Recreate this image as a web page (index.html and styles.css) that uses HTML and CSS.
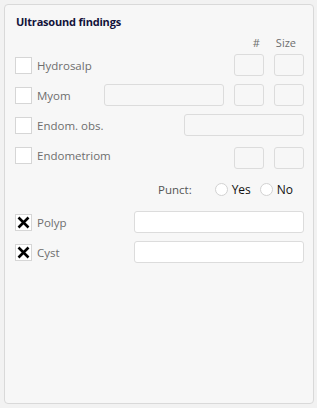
FILE: index.html
```html
<!DOCTYPE html>
<html>
<head>
<meta charset="utf-8">
<link rel="stylesheet" href="styles.css">
</head>
<body>
<div class="panel">
  <div class="title">Ultrasound findings</div>
  <div class="head"><span class="h-num">#</span><span class="h-size">Size</span></div>

  <div class="row">
    <span class="cb"></span><span class="lbl">Hydrosalp</span>
    <span class="right"><span class="box sm"></span><span class="box sm"></span></span>
  </div>
  <div class="row">
    <span class="cb"></span><span class="lbl">Myom</span>
    <span class="right"><span class="box wide"></span><span class="box sm"></span><span class="box sm"></span></span>
  </div>
  <div class="row">
    <span class="cb"></span><span class="lbl">Endom. obs.</span>
    <span class="right"><span class="box wide"></span></span>
  </div>
  <div class="row top">
    <span class="cb"></span><span class="lbl">Endometriom</span>
    <span class="right"><span class="box sm"></span><span class="box sm"></span></span>
  </div>
  <div class="punct">
    <span class="plbl">Punct:</span>
    <span class="radio"></span><span class="rtxt">Yes</span>
    <span class="radio r2"></span><span class="rtxt">No</span>
  </div>
  <div class="row">
    <span class="cb"><svg width="13" height="13" viewBox="0 0 13 13"><path d="M1.5 1.5 L11.5 11.5 M11.5 1.5 L1.5 11.5" stroke="#000" stroke-width="2.6" fill="none"/></svg></span><span class="lbl">Polyp</span>
    <span class="right"><span class="box long"></span></span>
  </div>
  <div class="row">
    <span class="cb"><svg width="13" height="13" viewBox="0 0 13 13"><path d="M1.5 1.5 L11.5 11.5 M11.5 1.5 L1.5 11.5" stroke="#000" stroke-width="2.6" fill="none"/></svg></span><span class="lbl">Cyst</span>
    <span class="right"><span class="box long"></span></span>
  </div>
</div>
</body>
</html>
```
FILE: styles.css
```css
html, body {
  margin: 0;
  padding: 0;
  background: #f2f2f2;
}
body {
  padding: 4px;
  font-family: "Open Sans", "Noto Sans", sans-serif;
  font-size: 11.5px;
  color: #6e6e6e;
}
.panel {
  box-sizing: border-box;
  width: 310px;
  height: 400px;
  background: #f7f7f7;
  border: 1px solid #d9d9d9;
  border-radius: 4px;
  padding: 9px 9px 0 10px;
}
.title {
  height: 16px;
  line-height: 16px;
  font-weight: 700;
  font-size: 11px;
  letter-spacing: -0.2px;
  color: #12123a;
  margin-left: 1px;
}
.head {
  margin-top: 6px;
  height: 14px;
  line-height: 14px;
  display: flex;
  justify-content: flex-end;
  padding-right: 8px;
  font-size: 11px;
  color: #6e6e6e;
}
.h-num { margin-right: 16px; }
.row {
  height: 30px;
  display: flex;
  align-items: center;
}
.row.top { align-items: flex-start; padding-top: 7px; box-sizing: border-box; }
.cb {
  box-sizing: border-box;
  width: 17px;
  height: 17px;
  background: #fff;
  border: 1px solid #d6d6d6;
  display: flex;
  align-items: center;
  justify-content: center;
  flex: none;
}
.lbl {
  margin-left: 5px;
  color: #6e6e6e;
  line-height: 17px;
}
.right {
  margin-left: auto;
  display: flex;
  gap: 10px;
}
.box {
  box-sizing: border-box;
  height: 22px;
  border: 1px solid #dcdcdc;
  border-radius: 3px;
  background: #f7f7f7;
  display: block;
}
.box.sm { width: 30px; }
.box.wide { width: 120px; }
.box.long { width: 170px; background: #fff; }
.punct {
  height: 37px;
  display: flex;
  align-items: center;
  padding-top: 1px;
  box-sizing: border-box;
}
.plbl {
  margin-left: 143px;
  color: #555;
}
.radio {
  box-sizing: border-box;
  width: 13px;
  height: 13px;
  border-radius: 50%;
  border: 1px solid #d2d2d2;
  background: #fff;
  margin-left: 23px;
}
.radio.r2 { margin-left: 9px; }
.rtxt {
  margin-left: 4px;
  color: #111;
  font-size: 12px;
}
```
